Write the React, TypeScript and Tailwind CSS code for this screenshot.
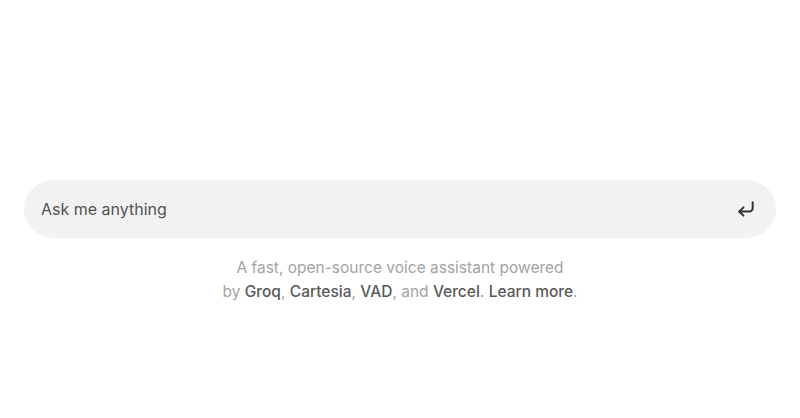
import React, { useState } from "react";
import { CornerDownLeft } from "lucide-react";

const App: React.FC = () => {
  const [input, setInput] = useState("");

  return (
    <main
      className="min-h-screen bg-white flex flex-col items-center px-6 pt-[180px]"
      style={{ fontFamily: "Inter, 'Noto Sans', sans-serif" }}
    >
      <form
        className="w-full h-[58px] flex items-center bg-[#f2f2f2] rounded-full pl-[17px] pr-[20px]"
        onSubmit={(e) => e.preventDefault()}
      >
        <input
          type="text"
          className="flex-1 bg-transparent outline-none text-base text-[#404040] placeholder:text-[#525252]"
          placeholder="Ask me anything"
          value={input}
          onChange={(e) => setInput(e.target.value)}
        />
        <button type="submit" className="text-[#333333]" aria-label="Submit">
          <CornerDownLeft size={20} strokeWidth={2.4} />
        </button>
      </form>

      <div className="mt-[18px] text-center text-[15.5px] leading-6 text-[#a3a3a3]">
        <p>A fast, open-source voice assistant powered</p>
        <p>
          by <a className="font-medium text-[#595959]">Groq</a>,{" "}
          <a className="font-medium text-[#595959]">Cartesia</a>,{" "}
          <a className="font-medium text-[#595959]">VAD</a>, and{" "}
          <a className="font-medium text-[#595959]">Vercel</a>.{" "}
          <a className="font-medium text-[#595959]">Learn more</a>.
        </p>
      </div>
    </main>
  );
};

export default App;
